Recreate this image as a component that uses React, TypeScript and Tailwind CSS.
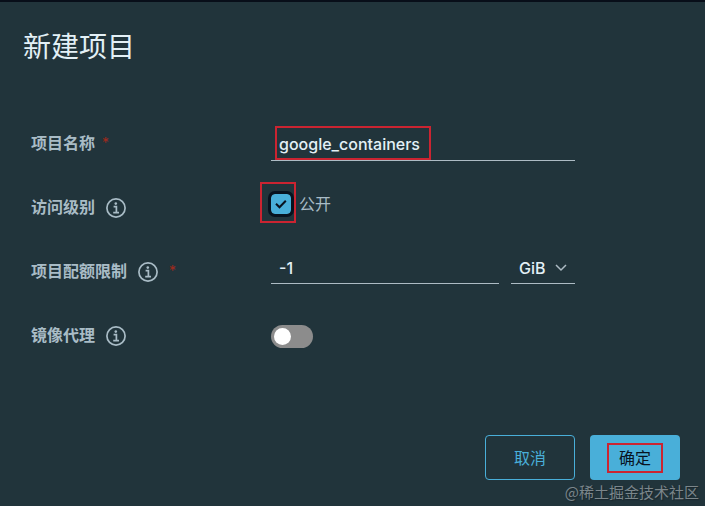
import { useState } from "react";
import type { ReactNode } from "react";

type FieldRowProps = {
  id: string;
  label: string;
  info?: boolean;
  required?: boolean;
  children: ReactNode;
};

function InfoIcon() {
  return (
    <svg
      viewBox="0 0 20 20"
      className="mt-0.5 ml-[11px] size-5"
      fill="none"
      stroke="currentColor"
      aria-hidden="true"
    >
      <circle cx="10" cy="10" r="9.1" strokeWidth="1.7" />
      <circle cx="9.8" cy="5.6" r="1.3" fill="currentColor" stroke="none" />
      <path d="M7.6 8.7h2.8v5.8M7.2 14.7h5.8" strokeWidth="1.7" />
    </svg>
  );
}

function FieldRow({ id, label, info, required, children }: FieldRowProps) {
  return (
    <div className="grid h-16 grid-cols-[240px_1fr] items-center">
      <div className="flex items-center text-[#a9bcc6]">
        <label htmlFor={id} className="font-semibold">
          {label}
        </label>
        {info && <InfoIcon />}
        {required && (
          <span
            className={
              info
                ? "ml-[11px] text-sm leading-4 text-[#a32a1c]"
                : "ml-[7px] text-sm leading-4 text-[#a32a1c]"
            }
          >
            *
          </span>
        )}
      </div>
      {children}
    </div>
  );
}

// red frame drawn over a control to call attention to it
function Highlight({ className }: { className: string }) {
  return (
    <span
      className={`pointer-events-none absolute border-2 border-[#cb2431] ${className}`}
      aria-hidden="true"
    />
  );
}

export default function App() {
  const [name, setName] = useState("google_containers");
  const [isPublic, setIsPublic] = useState(true);
  const [quota, setQuota] = useState("-1");
  const [unit, setUnit] = useState("GiB");
  const [proxy, setProxy] = useState(false);

  return (
    <main className="relative flex min-h-screen flex-col border-t-2 border-[#080e19] bg-[#21343b] font-['Inter','Noto_Sans_CJK_SC',sans-serif] text-base text-[#e3f0f6]">
      <h1 className="px-[23px] pt-[25px] text-[28px] leading-10 font-normal">
        新建项目
      </h1>

      <form
        id="project-form"
        className="mt-11 px-[31px]"
        onSubmit={(event) => event.preventDefault()}
      >
        <FieldRow id="name" label="项目名称" required>
          <div className="relative mt-1 max-w-[304px]">
            <input
              id="name"
              value={name}
              onChange={(event) => setName(event.target.value)}
              className="h-8 w-full border-b border-[#adbbc4] bg-transparent px-2 pb-0.5 font-medium outline-none"
            />
            <Highlight className="-top-[3px] left-1 h-[34px] w-[156px]" />
          </div>
        </FieldRow>

        <FieldRow id="public" label="访问级别" info>
          <div className="mb-1.5 flex items-center gap-2">
            <span className="relative flex size-5">
              <input
                id="public"
                type="checkbox"
                checked={isPublic}
                onChange={(event) => setIsPublic(event.target.checked)}
                className="size-5 appearance-none rounded-[4px] border border-[#49afd9] outline-3 outline-[#08131f] checked:bg-[#49afd9]"
              />
              {isPublic && (
                <svg
                  viewBox="0 0 20 20"
                  className="pointer-events-none absolute inset-0"
                  fill="none"
                  stroke="#08131f"
                  strokeWidth="2"
                  aria-hidden="true"
                >
                  <path d="M5 9.7l3.5 3.6 6.3-6.6" />
                </svg>
              )}
              <Highlight className="-top-3 -left-[11px] h-[41px] w-9" />
            </span>
            <label htmlFor="public" className="text-[#a9bcc6]">
              公开
            </label>
          </div>
        </FieldRow>

        <FieldRow id="quota" label="项目配额限制" info required>
          <div className="mb-1.5 flex max-w-[304px] gap-3">
            <input
              id="quota"
              value={quota}
              onChange={(event) => setQuota(event.target.value)}
              className="h-8 min-w-0 flex-1 border-b border-[#adbbc4] bg-transparent px-2 font-medium outline-none"
            />
            <div className="relative w-16">
              <select
                aria-label="单位"
                value={unit}
                onChange={(event) => setUnit(event.target.value)}
                className="h-8 w-full appearance-none border-b border-[#adbbc4] bg-transparent px-2 font-medium outline-none"
              >
                <option>MiB</option>
                <option>GiB</option>
                <option>TiB</option>
              </select>
              <svg
                viewBox="0 0 12 8"
                className="pointer-events-none absolute top-3 right-2 h-2 w-3"
                fill="none"
                stroke="#adbbc4"
                strokeWidth="1.5"
                aria-hidden="true"
              >
                <path d="M1 1l5 5 5-5" />
              </svg>
            </div>
          </div>
        </FieldRow>

        <FieldRow id="proxy" label="镜像代理" info>
          <div className="mt-0.5 flex">
            <input
              id="proxy"
              type="checkbox"
              role="switch"
              checked={proxy}
              onChange={(event) => setProxy(event.target.checked)}
              className="h-[23px] w-[42px] appearance-none rounded-full bg-[#8c8c8c] p-[3px] before:block before:size-[17px] before:rounded-full before:bg-white checked:bg-[#49afd9] checked:before:ml-auto"
            />
          </div>
        </FieldRow>
      </form>

      <footer className="mt-auto flex justify-end gap-[15px] px-[25px] pb-[26px]">
        <button
          type="button"
          className="h-[45px] w-[90px] rounded-[4px] border border-[#49afd9] text-[#49afd9]"
        >
          取消
        </button>
        <button
          type="submit"
          form="project-form"
          className="relative h-[45px] w-[90px] rounded-[4px] bg-[#49afd9] text-[#08131f]"
        >
          确定
          <Highlight className="top-2 left-[17px] h-[30px] w-14" />
        </button>
      </footer>

      <p className="pointer-events-none absolute right-1.5 bottom-1 font-['Noto_Sans_CJK_SC',sans-serif] text-[15px] leading-5 text-[#7b868b] [text-shadow:1px_1px_1px_#1a262c]">
        @稀土掘金技术社区
      </p>
    </main>
  );
}
